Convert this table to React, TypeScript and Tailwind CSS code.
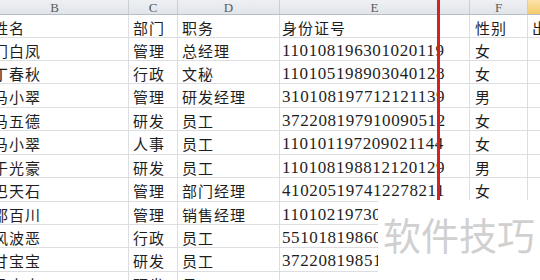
import React from "react";

const cjk = { fontFamily: '"Noto Sans CJK SC", "Noto Sans", sans-serif' };

const rows: { h: string; c: string[] }[] = [
  { h: "h-[23px]", c: ["姓名", "部门", "职务", "身份证号", "性别", "出"] },
  { h: "h-[23px]", c: ["门白凤", "管理", "总经理", "110108196301020119", "女", ""] },
  { h: "h-[23px]", c: ["丁春秋", "行政", "文秘", "110105198903040128", "女", ""] },
  { h: "h-[24px]", c: ["马小翠", "管理", "研发经理", "310108197712121139", "男", ""] },
  { h: "h-[23px]", c: ["马五德", "研发", "员工", "372208197910090512", "女", ""] },
  { h: "h-[24px]", c: ["马小翠", "人事", "员工", "110101197209021144", "女", ""] },
  { h: "h-[23px]", c: ["于光豪", "研发", "员工", "110108198812120129", "男", ""] },
  { h: "h-[24px]", c: ["巴天石", "管理", "部门经理", "410205197412278211", "女", ""] },
  { h: "h-[23px]", c: ["邵百川", "管理", "销售经理", "110102197308", "", ""] },
  { h: "h-[23px]", c: ["风波恶", "行政", "员工", "551018198607", "", ""] },
  { h: "h-[24px]", c: ["甘宝宝", "研发", "员工", "372208198511", "", ""] },
  { h: "h-[24px]", c: ["马夫人", "研发", "员工", "", "", ""] },
];

const widths = [
  "w-[148px] pl-[12px]",
  "w-[49px] pl-[4px]",
  "w-[102px] pl-[4px]",
  "w-[190px] pl-[2px]",
  "w-[58px] pl-[5px]",
  "w-[80px] pl-[4px]",
];

const headers = ["B", "C", "D", "E", "F", ""];

export default function App() {
  return (
    <div className="relative w-[540px] h-[280px] overflow-hidden bg-white text-[#1e1e1e]">
      <div className="flex flex-col ml-[-19px] w-[640px]">
        <div className="flex h-[15px] border-b border-[#b8bec6]">
          {headers.map((t, i) => (
            <div
              key={i}
              className={`${widths[i].split(" ")[0]} h-full border-r border-[#c9ced5] flex items-center justify-center text-[13px] leading-none text-[#5a5a5a] ${
                i === 5
                  ? "bg-gradient-to-b from-[#fbe3a6] to-[#f3cb6c]"
                  : "bg-gradient-to-b from-[#eef0f3] to-[#e1e5ea]"
              }`}
              style={{ fontFamily: '"Liberation Serif", serif' }}
            >
              {t}
            </div>
          ))}
        </div>
        {rows.map((r, ri) => (
          <div key={ri} className={`flex ${r.h} border-b border-[#dcdee1]`}>
            {r.c.map((t, ci) => (
              <div
                key={ci}
                className={`${widths[ci]} h-full border-r border-[#dcdee1] flex items-center pt-[2px] whitespace-nowrap overflow-hidden ${
                  ci === 3 && /^\d/.test(t) ? "text-[17px] tracking-[0.6px]" : "text-[15px] tracking-[1px]"
                } leading-none`}
                style={
                  ci === 3 && /^\d/.test(t)
                    ? { fontFamily: '"Liberation Serif", serif' }
                    : cjk
                }
              >
                {t}
              </div>
            ))}
          </div>
        ))}
      </div>

      <div className="absolute left-[437px] top-0 w-[3px] h-[200px] bg-[#d42222]" />

      <div
        className="absolute left-[378px] top-[200px] right-0 bottom-0 bg-white pl-[5px] pt-[15px] text-[38px] leading-none text-[#d0d0d0] whitespace-nowrap"
        style={cjk}
      >
        软件技巧
      </div>
    </div>
  );
}
